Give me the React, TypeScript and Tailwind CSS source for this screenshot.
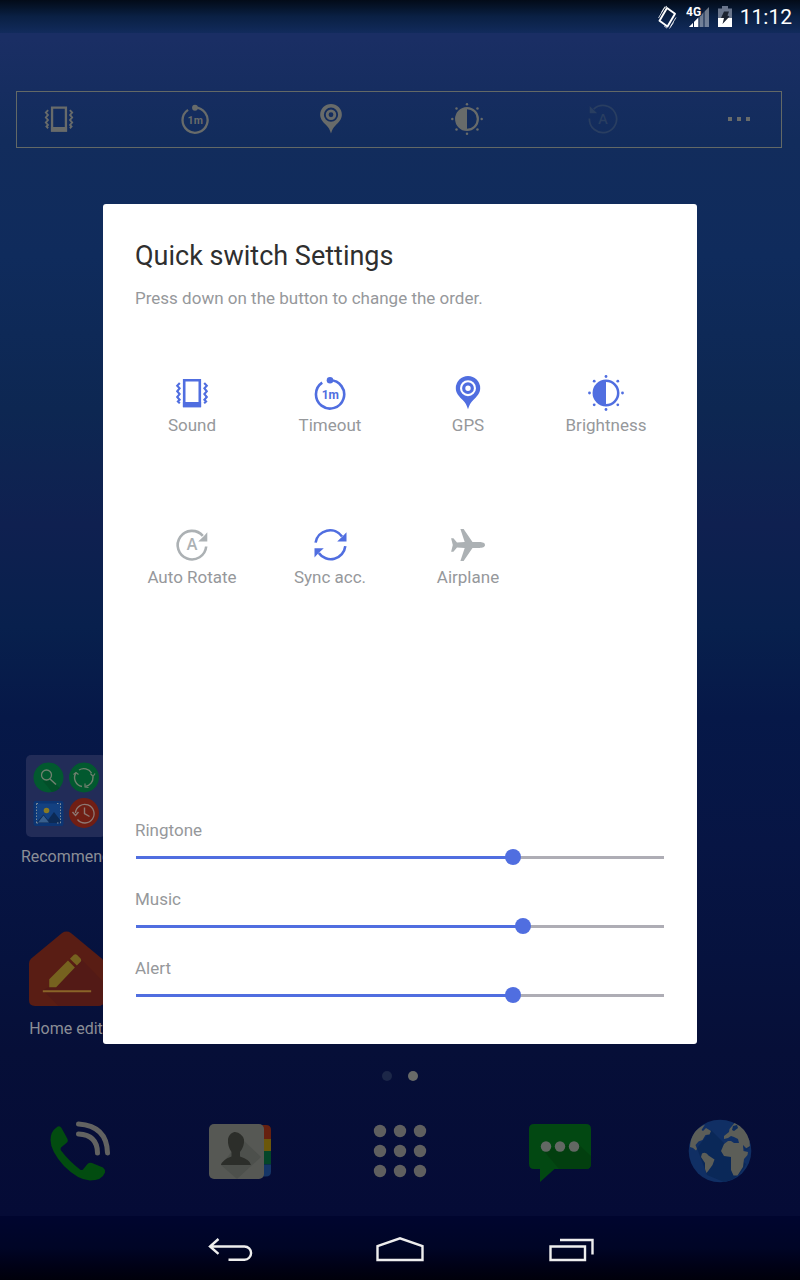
import { useState, type CSSProperties, type ReactNode } from "react";

type Draw = { className?: string };

const iconBase = "h-9 w-9";

function SoundIcon({ className = iconBase }: Draw) {
  return (
    <svg viewBox="0 0 36 36" className={className} fill="none" stroke="currentColor" aria-hidden="true">
      <path d="M10.2 5.2h15.6v25.8H10.2z" strokeWidth="2.600" />
      <path d="M8.900 27h18.200v5.200H8.900z" fill="currentColor" stroke="none" />
      <path d="M5.8 8 3.2 10.8l2.400 2.600-2.400 2.900 2.400 2.800-2.400 2.900 2.400 2.700-1.700 1.700L5.8 28.4M30.2 8l2.600 2.800-2.400 2.600 2.400 2.900-2.400 2.800 2.400 2.900-2.400 2.700 1.700 1.700-1.900 2" strokeWidth="2.100" />
    </svg>
  );
}

function TimeoutIcon({ className = iconBase }: Draw) {
  return (
    <svg viewBox="0 0 36 36" className={className} fill="none" stroke="currentColor" aria-hidden="true">
      <path d="M18 5.300A14.100 14.100 0 1 1 10.200 7.700" strokeWidth="2.600" />
      <circle cx="18" cy="5.300" r="3.300" fill="currentColor" stroke="none" />
      <text x="18.300" y="23.800" textAnchor="middle" fontSize="12" fontWeight="700" fill="currentColor" stroke="none" fontFamily="Liberation Sans Narrow, Roboto, sans-serif">1m</text>
    </svg>
  );
}

function GpsIcon({ className = iconBase }: Draw) {
  return (
    <svg viewBox="0 0 36 36" className={className} fill="currentColor" aria-hidden="true">
      <path
        fillRule="evenodd"
        d="M18 1a12.200 12.200 0 0 1 12.200 12.200c0 5-3.400 8.400-6.900 11.700-2.700 2.600-4 5-5.300 9.300-1.300-4.300-2.600-6.700-5.300-9.300C9.200 21.600 5.800 18.200 5.800 13.200A12.200 12.200 0 0 1 18 1zm0 4.200a8 8 0 1 0 0 16 8 8 0 0 0 0-16z"
      />
      <circle cx="18" cy="13.200" r="4.300" fill="none" stroke="currentColor" strokeWidth="3.200" />
    </svg>
  );
}

function BrightnessIcon({ className = iconBase }: Draw) {
  return (
    <svg viewBox="0 0 36 36" className={className} fill="currentColor" aria-hidden="true">
      <circle cx="18" cy="18" r="12.200" fill="none" stroke="currentColor" strokeWidth="2.500" />
      <path d="M18 5.500a12.500 12.500 0 0 0 0 25z" />
      <g>
        <circle cx="18" cy="1.500" r="1.400" />
        <circle cx="18" cy="34.500" r="1.400" />
        <circle cx="1.500" cy="18" r="1.400" />
        <circle cx="34.500" cy="18" r="1.400" />
        <circle cx="6.200" cy="6.200" r="1.400" />
        <circle cx="29.800" cy="6.200" r="1.400" />
        <circle cx="6.200" cy="29.800" r="1.400" />
        <circle cx="29.800" cy="29.800" r="1.400" />
      </g>
    </svg>
  );
}

function RotateIcon({ className = iconBase }: Draw) {
  return (
    <svg viewBox="0 0 36 36" className={className} fill="none" stroke="currentColor" aria-hidden="true">
      <path d="M32.200 19.500A14.300 14.300 0 1 1 28.800 8.800" strokeWidth="2.600" />
      <path d="M33.300 5.200V14.400H24.200l3.200-3 2.600-2.400z" fill="currentColor" stroke="none" />
      <text x="18" y="23" textAnchor="middle" fontSize="16" fontWeight="600" fill="currentColor" stroke="none" fontFamily="Open Sans, sans-serif">A</text>
    </svg>
  );
}

function RotateBackIcon({ className = iconBase }: Draw) {
  return (
    <svg viewBox="0 0 36 36" className={className} fill="none" stroke="currentColor" aria-hidden="true">
      <path d="M2.700 17.500A15.300 15.300 0 1 0 7.500 6.900" strokeWidth="2" />
      <path d="M3 3.500v8h8.500z" fill="currentColor" stroke="none" />
      <text x="18" y="23.500" textAnchor="middle" fontSize="16" fontWeight="600" fill="currentColor" stroke="none" fontFamily="Open Sans, sans-serif">A</text>
    </svg>
  );
}

function SyncIcon({ className = iconBase }: Draw) {
  return (
    <svg viewBox="0 0 36 36" className={className} fill="none" stroke="currentColor" aria-hidden="true">
      <path d="M3.600 15.600A14.600 14.600 0 0 1 30 9.600M33.300 19.200A14.600 14.600 0 0 1 6.800 26" strokeWidth="2.600" />
      <path d="M34.500 5.200v9.200h-9.300l5.700-5.400zM2.500 30.600v-9.400h9.300l-5.500 5z" fill="currentColor" stroke="none" />
    </svg>
  );
}

function AirplaneIcon({ className = iconBase }: Draw) {
  return (
    <svg viewBox="0 0 36 36" className={className} fill="currentColor" aria-hidden="true">
      <path d="M35 18c0-2-2.500-2.900-5.500-2.900l-7-.2L13.600 2h-3.200l4.300 12.900-7.700.7-3.600-4.400H1.100L2.800 18l-1.700 6.800h2.300L7 20.400l7.700.7L10.400 34h3.200l8.900-12.900 7-.2c3 0 5.500-.9 5.500-2.900z" />
    </svg>
  );
}

function StatusBar() {
  return (
    <header className="flex h-[33px] items-center justify-end gap-2 bg-linear-to-b from-[#030b18] via-[#0a2044] to-[#122b5c] px-2 text-white">
      <svg viewBox="0 0 22 24" className="h-6 w-[22px]" fill="none" stroke="#fff" aria-label="Vibrate" role="img">
        <path d="M11 3 19 8.800 11.500 21.500 3.500 15.800z" strokeWidth="1.900" strokeLinejoin="round" />
        <path d="m2.500 13 5.500-9.500 3-2.500M5.500 7.500 9 1.500M14.500 21.500l5.500-9M13.500 23.500l4-6M8 20.800l3 2.400" strokeWidth=".8" />
      </svg>
      <svg viewBox="0 0 24 24" className="h-6 w-6" aria-label="4G signal" role="img">
        <path d="M3 22 23 2v20z" fill="#fff" opacity=".42" />
        <path d="M3 22l9.500-9.500V22z" fill="#fff" />
        <path d="M7.500 14v8M13 8v14M18 4v18" stroke="#0c2248" strokeWidth="1" />
        <text x="0" y="11" fontSize="12" fontWeight="700" fill="#fff" stroke="#0a1c3c" strokeWidth="2" paintOrder="stroke" fontFamily="Liberation Sans Narrow, Roboto, sans-serif">4G</text>
      </svg>
      <svg viewBox="0 0 14 22" className="h-[22px] w-[14px]" aria-label="Battery charging" role="img">
        <path d="M4 0h6v2.500h4V12H0V2.500h4z" fill="#69758c" />
        <path d="M0 12h14v9H0z" fill="#fff" />
        <path d="M6 5.500h5l-1.500 4 2 1-7 7.500 1.500-6H3z" fill="#1b2230" />
      </svg>
      <time className="text-[21px] leading-6">11:12</time>
    </header>
  );
}

function QuickBar() {
  return (
    <section
      aria-label="Quick switch"
      className="mt-[58px] mr-[18px] ml-4 flex h-[57px] items-center justify-between border border-[#636966] px-[22px] pb-0.5 text-[#686b6a]"
    >
      <button aria-label="Sound" className="flex w-10 justify-center"><SoundIcon className="h-8 w-8" /></button>
      <button aria-label="Timeout" className="flex w-10 justify-center"><TimeoutIcon className="h-8 w-8" /></button>
      <button aria-label="GPS" className="flex w-10 justify-center"><GpsIcon className="h-8 w-8" /></button>
      <button aria-label="Brightness" className="flex w-10 justify-center"><BrightnessIcon className="h-8 w-8" /></button>
      <button aria-label="Auto Rotate" className="flex w-10 justify-center text-[#293e61]"><RotateBackIcon className="h-8 w-8" /></button>
      <button aria-label="More" className="flex w-10 justify-center gap-[5px]">
        <span className="size-1 bg-current" />
        <span className="size-1 bg-current" />
        <span className="size-1 bg-current" />
      </button>
    </section>
  );
}

function AppCell({ label, children }: { label: string; children: ReactNode }) {
  return (
    <button className="flex w-[132px] flex-col items-center gap-[7px]">
      <span className="flex h-[88px] items-center">{children}</span>
      <span className="text-base leading-5 text-[#8b8e96]">{label}</span>
    </button>
  );
}

function FolderArt() {
  return (
    <svg viewBox="0 0 80 82" className="h-[82px] w-20" fill="none" aria-hidden="true">
      <rect width="80" height="82" rx="5" fill="#222c58" />
      <circle cx="22.500" cy="22.500" r="15" fill="#02592f" />
      <path d="m24 25 6 5 4 3a15 15 0 0 1-8 4L17 26z" fill="#024f29" />
      <circle cx="20.500" cy="20" r="5" stroke="#70806f" strokeWidth="1.300" />
      <path d="m24 24 6 5.500" stroke="#70806f" strokeWidth="1.500" />
      <circle cx="58" cy="22.500" r="15" fill="#02592f" />
      <path d="M56 31.500a9 9 0 0 1-6-13.700M53 15a9 9 0 0 1 12.500 3M67 22a9 9 0 0 1-7.500 9.400" stroke="#70806f" strokeWidth="1.400" />
      <path d="m47.500 19.500 2.500-2 2.500 2M59 28.500v3.500l3.500.5M64.500 18.500l2.500 3 2-3" stroke="#70806f" strokeWidth="1.200" />
      <rect x="7.500" y="46" width="30" height="25" rx="2" fill="#0c3573" />
      <rect x="10.500" y="48.500" width="24" height="19.500" fill="#134181" />
      <path d="m11 67 6.500-7.500L22 65l6-8 6.500 8.500V68H11z" fill="#0c2a55" />
      <path d="m12 67.500 5.500-7 5.500 7z" fill="#385f8d" />
      <path d="M10.500 48.500v19.500M34.500 48.500v19.500M10.500 48.500h3M31 48.500h3.500M10.500 68h3M31 68h3.500" stroke="#7d8b98" strokeDasharray="1.500 1.500" />
      <circle cx="20.500" cy="55.500" r="2.800" fill="#8a7a22" />
      <circle cx="58" cy="58" r="15" fill="#701e14" />
      <path d="M49.500 58a9.300 9.300 0 1 1 2 6.500" stroke="#8d7873" strokeWidth="1.300" />
      <path d="m46.500 57 3 3.500 3-3.500M58.500 52.500v6l5 3" stroke="#8d7873" strokeWidth="1.400" />
    </svg>
  );
}

function HomeEditArt() {
  return (
    <svg viewBox="0 0 76 76" className="size-[75px]" aria-hidden="true">
      <path d="M33.500 2Q38 -1 42.500 2L74 28q2 2 2 5v37q0 6-6 6H6q-6 0-6-6V33q0-3 2-5z" fill="#591d14" />
      <path d="m52.500 28 23.500 24v18q0 6-6 6H30L14 60l8-4z" fill="#531a16" />
      <path d="M20.500 57v-8L39.500 30l7 7-19 20zM41.500 28l4-4q1.500-1 3 0l4 4q1 1.500 0 3l-4 4z" fill="#76621f" />
      <path d="M14 61h49" stroke="#8a6428" strokeWidth="2" />
    </svg>
  );
}

function PhoneArt() {
  return (
    <svg viewBox="0 0 64 64" className="size-16" fill="none" aria-hidden="true">
      <path d="M8.500 8.500q3-2.500 5 .5l6 11q1 2-.5 3.500L13 28.500q-1 1.500 0 3Q21 42 32 50.500q1.500 1 3 0l4.500-5.500q2-2 4.500-1l11 4.500q2.500 2 2 5-3 8-15 8Q30 61 16 47 2.500 32 2.500 21 2.500 12.500 8.500 8.500z" fill="#024c10" />
      <path d="M30.500 15Q49.500 16 49.500 34M30.500 5Q59 7 59.500 34" stroke="#626261" strokeWidth="5" strokeLinecap="round" />
    </svg>
  );
}

function ContactsArt() {
  return (
    <svg viewBox="0 0 64 64" className="size-16" aria-hidden="true">
      <path d="M50 6h8q5 0 5 5v9H50z" fill="#66200f" />
      <path d="M50 20h13v12H50z" fill="#6b570a" />
      <path d="M50 32h13v13.500H50z" fill="#034629" />
      <path d="M50 45.500h13v7q0 5-5 5h-8z" fill="#143567" />
      <rect x="1" y="5" width="55" height="55" rx="5" fill="#565854" />
      <path d="m34 20 19 18-24 22-16-14z" fill="#4d504c" />
      <path d="M25 13.500q1-.8 2-.5 7 1 9 7.500.5 7-4 12.500v4.500Q42 40.500 43 46H13q1-5 10.500-8.500V33q-4-5.500-3.500-13 1-5 5-6.500z" fill="#2c2e2a" />
    </svg>
  );
}

function AppsArt() {
  return (
    <svg viewBox="0 0 64 64" className="size-16" fill="#5f5f5f" aria-hidden="true">
      {[12, 32, 52].flatMap((cx) => [12, 32, 52].map((cy) => <circle key={`${cx}-${cy}`} cx={cx} cy={cy} r="6.200" />))}
    </svg>
  );
}

function MessageArt() {
  return (
    <svg viewBox="0 0 64 64" className="size-16" aria-hidden="true">
      <path d="M6 5h52q5 0 5 5v35q0 5-5 5H26.500L12 63V50H6q-5 0-5-5V10q0-5 5-5z" fill="#024812" />
      <path d="m15 31 34-7 14 13v8q0 5-5 5H31z" fill="#023f0f" />
      <circle cx="18" cy="27.500" r="5.200" fill="#626863" />
      <circle cx="32" cy="27.500" r="5.200" fill="#626863" />
      <circle cx="46" cy="27.500" r="5.200" fill="#626863" />
    </svg>
  );
}

function GlobeArt() {
  return (
    <svg viewBox="0 0 64 64" className="size-16" aria-hidden="true">
      <circle cx="32" cy="32" r="31.300" fill="#102f64" />
      <path d="m23 11 20 20 15 14a31 31 0 0 1-22 18L19 56 9 29z" fill="#0a2858" />
      <path
        d="M17 5.500 13.500 11l1.500 1 3-3 5 3-1.500 3.500-4 .5-3 5-4 1.500L7.500 26l1.500 4-1 1.500-3-2.500L2 28Q2.500 12 17 5.500zM14 34.500q4-2 6.500 2l6 4-2 5.500-4 5.500-2 2.500-1.500-4v-6L13 38zM41.500 10l5-6Q58 9 61.500 22l.5 7-3 1-4-4 .5 6 4.500 1-.5 3-3.500 4-1 8-5.500 8.500h-4l-2.500-5.500v-13l-7-1-3-5 3-7 4-3h3l3 2h5l-1-4-4-2-3-1-3 2-4 1v-3l5-4z"
        fill="#5c5e58"
      />
      <path d="m45 7 4-1 1 3-4 3-2-1zM55 26l2 4 5-3v2l-5 3z" fill="#0d2b5c" />
    </svg>
  );
}

function Dock() {
  return (
    <nav aria-label="Dock" className="mt-[38px] grid grid-cols-5 justify-items-center pb-[33px]">
      <button aria-label="Phone"><PhoneArt /></button>
      <button aria-label="Contacts"><ContactsArt /></button>
      <button aria-label="Apps"><AppsArt /></button>
      <button aria-label="Messages"><MessageArt /></button>
      <button aria-label="Browser"><GlobeArt /></button>
    </nav>
  );
}

function SystemNav() {
  return (
    <nav aria-label="System" className="flex h-16 justify-center bg-linear-to-b from-[#00052f] via-[#000526] to-[#00000b] pt-1.5">
      <button aria-label="Back" className="flex w-[170px] items-center justify-center">
        <svg viewBox="0 0 48 28" className="h-7 w-12" fill="none" stroke="#eee" strokeWidth="2.400">
          <path d="M12.500 2 4 9.500l8.500 7.300M4 9.500h34.500a6.600 6.600 0 0 1 0 13.200H22.500" />
        </svg>
      </button>
      <button aria-label="Home" className="flex w-[170px] items-center justify-center">
        <svg viewBox="0 0 48 28" className="h-7 w-12" fill="none" stroke="#eee" strokeWidth="2.400">
          <path d="M1.500 23V9L24 1.300 46.500 9v14z" />
        </svg>
      </button>
      <button aria-label="Recent apps" className="flex w-[170px] items-center justify-center">
        <svg viewBox="0 0 48 28" className="h-7 w-12" fill="none" stroke="#eee" strokeWidth="2.400">
          <path d="M4.500 9.500h34.500v13.500H4.500zM14 3h32.500v14.500" />
        </svg>
      </button>
    </nav>
  );
}

const switches = [
  { label: "Sound", Icon: SoundIcon, on: true },
  { label: "Timeout", Icon: TimeoutIcon, on: true },
  { label: "GPS", Icon: GpsIcon, on: true },
  { label: "Brightness", Icon: BrightnessIcon, on: true },
  { label: "Auto Rotate", Icon: RotateIcon, on: false },
  { label: "Sync acc.", Icon: SyncIcon, on: true },
  { label: "Airplane", Icon: AirplaneIcon, on: false },
];

function Volume({ id, label, initial }: { id: string; label: string; initial: number }) {
  const [value, setValue] = useState(initial);
  return (
    <div className="flex flex-col gap-[9px]">
      <label htmlFor={id} className="leading-5">{label}</label>
      <input
        id={id}
        type="range"
        min={0}
        max={100}
        value={value}
        onChange={(e) => setValue(Number(e.target.value))}
        style={{ "--fill": `${value}%` } as CSSProperties}
        className="h-4 w-full appearance-none bg-[linear-gradient(to_right,#506ee0_var(--fill),#aeadb5_var(--fill))] bg-[length:calc(100%-2px)_3px] bg-center bg-no-repeat [&::-webkit-slider-thumb]:size-4 [&::-webkit-slider-thumb]:appearance-none [&::-webkit-slider-thumb]:rounded-full [&::-webkit-slider-thumb]:bg-[#506ee0]"
      />
    </div>
  );
}

function SettingsDialog() {
  return (
    <div
      role="dialog"
      aria-labelledby="settings-title"
      className="flex min-h-[840px] w-full max-w-[594px] flex-col rounded-[3px] bg-white pt-[34px] pb-[41px] text-[17px] text-[#96989b]"
    >
      <div className="px-8">
        <h1 id="settings-title" className="text-[27px] leading-9 text-[#2f2f2f]">Quick switch Settings</h1>
        <p className="mt-3 leading-6">Press down on the button to change the order.</p>
      </div>
      <div className="mt-[65px] grid grid-cols-4 gap-y-[92px] pr-[22px] pl-5">
        {switches.map(({ label, Icon, on }) => (
          <button key={label} aria-pressed={on} className="flex flex-col items-center gap-1">
            <span className={on ? "text-[#506ee0]" : "text-[#acb1b4]"}><Icon /></span>
            <span className="leading-5">{label}</span>
          </button>
        ))}
      </div>
      <div className="mt-auto flex flex-col gap-6 px-8">
        <Volume id="ringtone" label="Ringtone" initial={72} />
        <Volume id="music" label="Music" initial={74} />
        <Volume id="alert" label="Alert" initial={72} />
      </div>
    </div>
  );
}

export default function App() {
  return (
    <div className="relative flex min-h-screen flex-col bg-[linear-gradient(to_bottom,#1a2e64_3%,#122c5c_11%,#0f2b5c_20%,#0d2752_32%,#0f2050_41%,#08204d_49%,#061848_56%,#071544_66%,#06123e_75%,#060f38_82%,#050b36_95%)] font-[Roboto,sans-serif]">
      <StatusBar />
      <QuickBar />
      <main className="flex flex-1 flex-col justify-end gap-[57px]">
        <AppCell label="Recommend"><FolderArt /></AppCell>
        <AppCell label="Home edit"><HomeEditArt /></AppCell>
      </main>
      <div className="mt-8 flex justify-center gap-4">
        <span className="size-[10px] rounded-full bg-[#1c2748]" />
        <span className="size-[10px] rounded-full bg-[#686a68]" />
      </div>
      <Dock />
      <SystemNav />
      <div className="absolute inset-0 flex items-center justify-center px-4 pt-8 pb-16">
        <SettingsDialog />
      </div>
    </div>
  );
}
